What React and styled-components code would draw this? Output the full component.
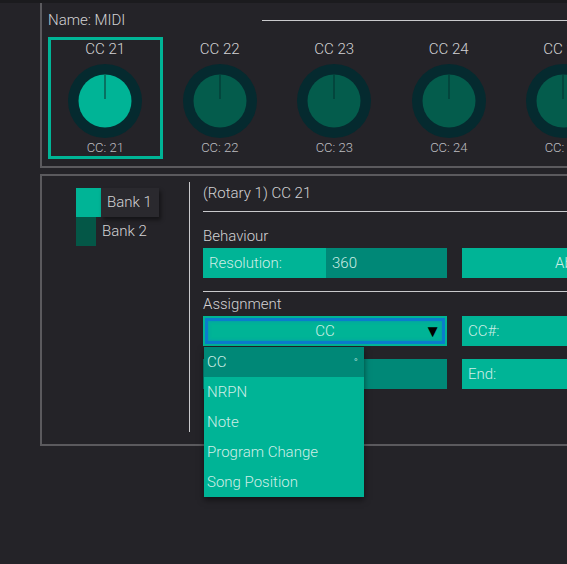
import React from "react";
import styled, { createGlobalStyle } from "styled-components";

const TEAL = "#00b496";
const TEAL_DARK = "#008877";
const LINE = "#5b5a5e";

const GlobalStyle = createGlobalStyle`
  html {
    overflow: hidden;
    background: #242328;
  }
  body {
    margin: 0;
    min-height: 100vh;
    background: #242328;
    font-family: Roboto, "Liberation Sans", sans-serif;
    font-weight: 300;
    color: #d2d2d4;
  }
`;

const TopStrip = styled.div`
  height: 3px;
  background: #1b1b1e;
`;

const Page = styled.div`
  padding-left: 40px;
  width: 700px;
`;

const ControllerPanel = styled.div`
  border-left: 2px solid ${LINE};
  border-bottom: 2px solid ${LINE};
  padding: 0 0 7px 6px;
`;

const NameRow = styled.div`
  height: 34px;
  display: flex;
  align-items: center;
  font-size: 15px;

  & hr {
    flex: 1;
    margin: 0 0 0 137px;
    border: none;
    border-top: 1px solid #c9c9cc;
  }
`;

const KnobRow = styled.div`
  display: flex;
`;

const KnobCell = styled.div`
  box-sizing: border-box;
  width: 114.5px;
  height: 122px;
  flex-shrink: 0;
  border: 3px solid ${(p) => (p.$active ? TEAL : "transparent")};
  display: flex;
  flex-direction: column;
  align-items: center;
`;

const KnobTitle = styled.div`
  font-size: 15px;
  line-height: 18px;
`;

const KnobCaption = styled.div`
  font-size: 13px;
  line-height: 16px;
  color: #bdbdc0;
  margin-top: 2px;
`;

const KnobSvg = styled.svg`
  margin-top: 6px;
  display: block;
`;

const Knob = ({ active }) => (
  <KnobSvg width="74" height="74" viewBox="0 0 74 74">
    <circle cx="37" cy="37" r="37" fill="#052a2f" />
    <circle cx="37" cy="37" r="26.5" fill={active ? TEAL : "#045c4c"} />
    <line
      x1="37"
      y1="10.5"
      x2="37"
      y2="35"
      stroke={active ? "#0b5d50" : "#033f38"}
      strokeWidth="1.5"
    />
  </KnobSvg>
);

const EditorPanel = styled.div`
  margin-top: 6px;
  border: 2px solid ${LINE};
  border-right: none;
  height: 262px;
  display: flex;
  padding-top: 6px;
  box-sizing: content-box;
`;

const BankList = styled.div`
  width: 147px;
  padding: 6px 0 0 34px;
  box-sizing: border-box;
`;

const BankItem = styled.div`
  display: flex;
  align-items: center;
  height: 29px;
  font-size: 15px;
`;

const BankSwatch = styled.div`
  width: ${(p) => (p.$active ? 25 : 20)}px;
  height: 29px;
  background: ${(p) => (p.$active ? TEAL : "#045747")};
`;

const BankLabel = styled.div`
  height: 29px;
  line-height: 29px;
  padding: 0 ${(p) => (p.$active ? 7 : 0)}px 0 6px;
  background: ${(p) => (p.$active ? "#2a292e" : "transparent")};
  box-shadow: ${(p) => (p.$active ? "2px 3px 4px rgba(0,0,0,0.45)" : "none")};
`;

const Divider = styled.div`
  width: 1px;
  height: 250px;
  background: #c9c9cc;
`;

const Detail = styled.div`
  flex: 1;
  padding-left: 13px;
`;

const Title = styled.div`
  font-size: 15px;
  line-height: 22px;
`;

const Rule = styled.hr`
  margin: ${(p) => p.$top}px 0 0;
  border: none;
  border-top: 1px solid #c9c9cc;
`;

const Section = styled.div`
  font-size: 15px;
  line-height: 18px;
  margin-top: ${(p) => p.$top}px;
`;

const FieldRow = styled.div`
  display: flex;
  gap: 15px;
  margin-top: ${(p) => p.$top}px;
  position: relative;
  z-index: ${(p) => (p.$raised ? 2 : 1)};
`;

const Field = styled.div`
  width: 244px;
  height: 30px;
  flex-shrink: 0;
  display: flex;
  align-items: center;
  background: ${(p) => (p.$dark ? TEAL_DARK : TEAL)};
  color: #cdeee6;
  font-size: 15px;
  justify-content: ${(p) => (p.$center ? "center" : "flex-start")};
`;

const FieldLabel = styled.div`
  width: 123px;
  height: 100%;
  display: flex;
  align-items: center;
  padding-left: 6px;
  box-sizing: border-box;
`;

const FieldValue = styled.div`
  flex: 1;
  height: 100%;
  display: flex;
  align-items: center;
  padding-left: 6px;
  background: ${TEAL_DARK};
`;

const Padded = styled.span`
  padding-left: 6px;
`;

const Select = styled.div`
  width: 244px;
  height: 30px;
  box-sizing: border-box;
  flex-shrink: 0;
  background: ${TEAL};
  box-shadow: inset 0 0 0 2px ${TEAL}, inset 0 0 0 5px #0b7ccb,
    inset 0 0 3px 6px rgba(11, 124, 203, 0.35);
  color: #cdeee6;
  font-size: 15px;
  display: flex;
  align-items: center;
  justify-content: center;
  position: relative;

  & b {
    position: absolute;
    right: 6px;
    top: 5px;
    color: #000;
    font-size: 17px;
    line-height: 20px;
    font-weight: 400;
  }
`;

const Menu = styled.div`
  position: absolute;
  left: 1px;
  top: 31px;
  width: 160px;
  background: ${TEAL};
  box-shadow: 0 3px 6px rgba(0, 0, 0, 0.5);
`;

const MenuItem = styled.div`
  height: 30px;
  display: flex;
  align-items: center;
  justify-content: space-between;
  padding: 0 6px 0 3px;
  font-size: 15px;
  color: #cdeee6;
  background: ${(p) => (p.$active ? TEAL_DARK : "transparent")};

  & small {
    font-size: 11px;
  }
`;

const knobs = [21, 22, 23, 24, 25];
const options = ["CC", "NRPN", "Note", "Program Change", "Song Position"];

export default function App() {
  return (
    <>
      <GlobalStyle />
      <TopStrip />
      <Page>
        <ControllerPanel>
          <NameRow>
            Name: MIDI
            <hr />
          </NameRow>
          <KnobRow>
            {knobs.map((n, i) => (
              <KnobCell key={n} $active={i === 0}>
                <KnobTitle>CC {n}</KnobTitle>
                <Knob active={i === 0} />
                <KnobCaption>CC: {n}</KnobCaption>
              </KnobCell>
            ))}
          </KnobRow>
        </ControllerPanel>

        <EditorPanel>
          <BankList>
            <BankItem>
              <BankSwatch $active />
              <BankLabel $active>Bank 1</BankLabel>
            </BankItem>
            <BankItem>
              <BankSwatch />
              <BankLabel>Bank 2</BankLabel>
            </BankItem>
          </BankList>
          <Divider />
          <Detail>
            <Title>(Rotary 1) CC 21</Title>
            <Rule $top={7} />
            <Section $top={15}>Behaviour</Section>
            <FieldRow $top={3}>
              <Field>
                <FieldLabel>Resolution:</FieldLabel>
                <FieldValue>360</FieldValue>
              </Field>
              <Field $center>Absolute</Field>
            </FieldRow>
            <Rule $top={13} />
            <Section $top={3}>Assignment</Section>
            <FieldRow $top={3} $raised>
              <Select>
                CC
                <b>▼</b>
                <Menu>
                  {options.map((o, i) => (
                    <MenuItem key={o} $active={i === 0}>
                      {o}
                      {i === 0 && <small>°</small>}
                    </MenuItem>
                  ))}
                </Menu>
              </Select>
              <Field>
                <Padded>CC#:</Padded>
              </Field>
            </FieldRow>
            <FieldRow $top={13}>
              <Field $dark />
              <Field>
                <Padded>End:</Padded>
              </Field>
            </FieldRow>
          </Detail>
        </EditorPanel>
      </Page>
    </>
  );
}
